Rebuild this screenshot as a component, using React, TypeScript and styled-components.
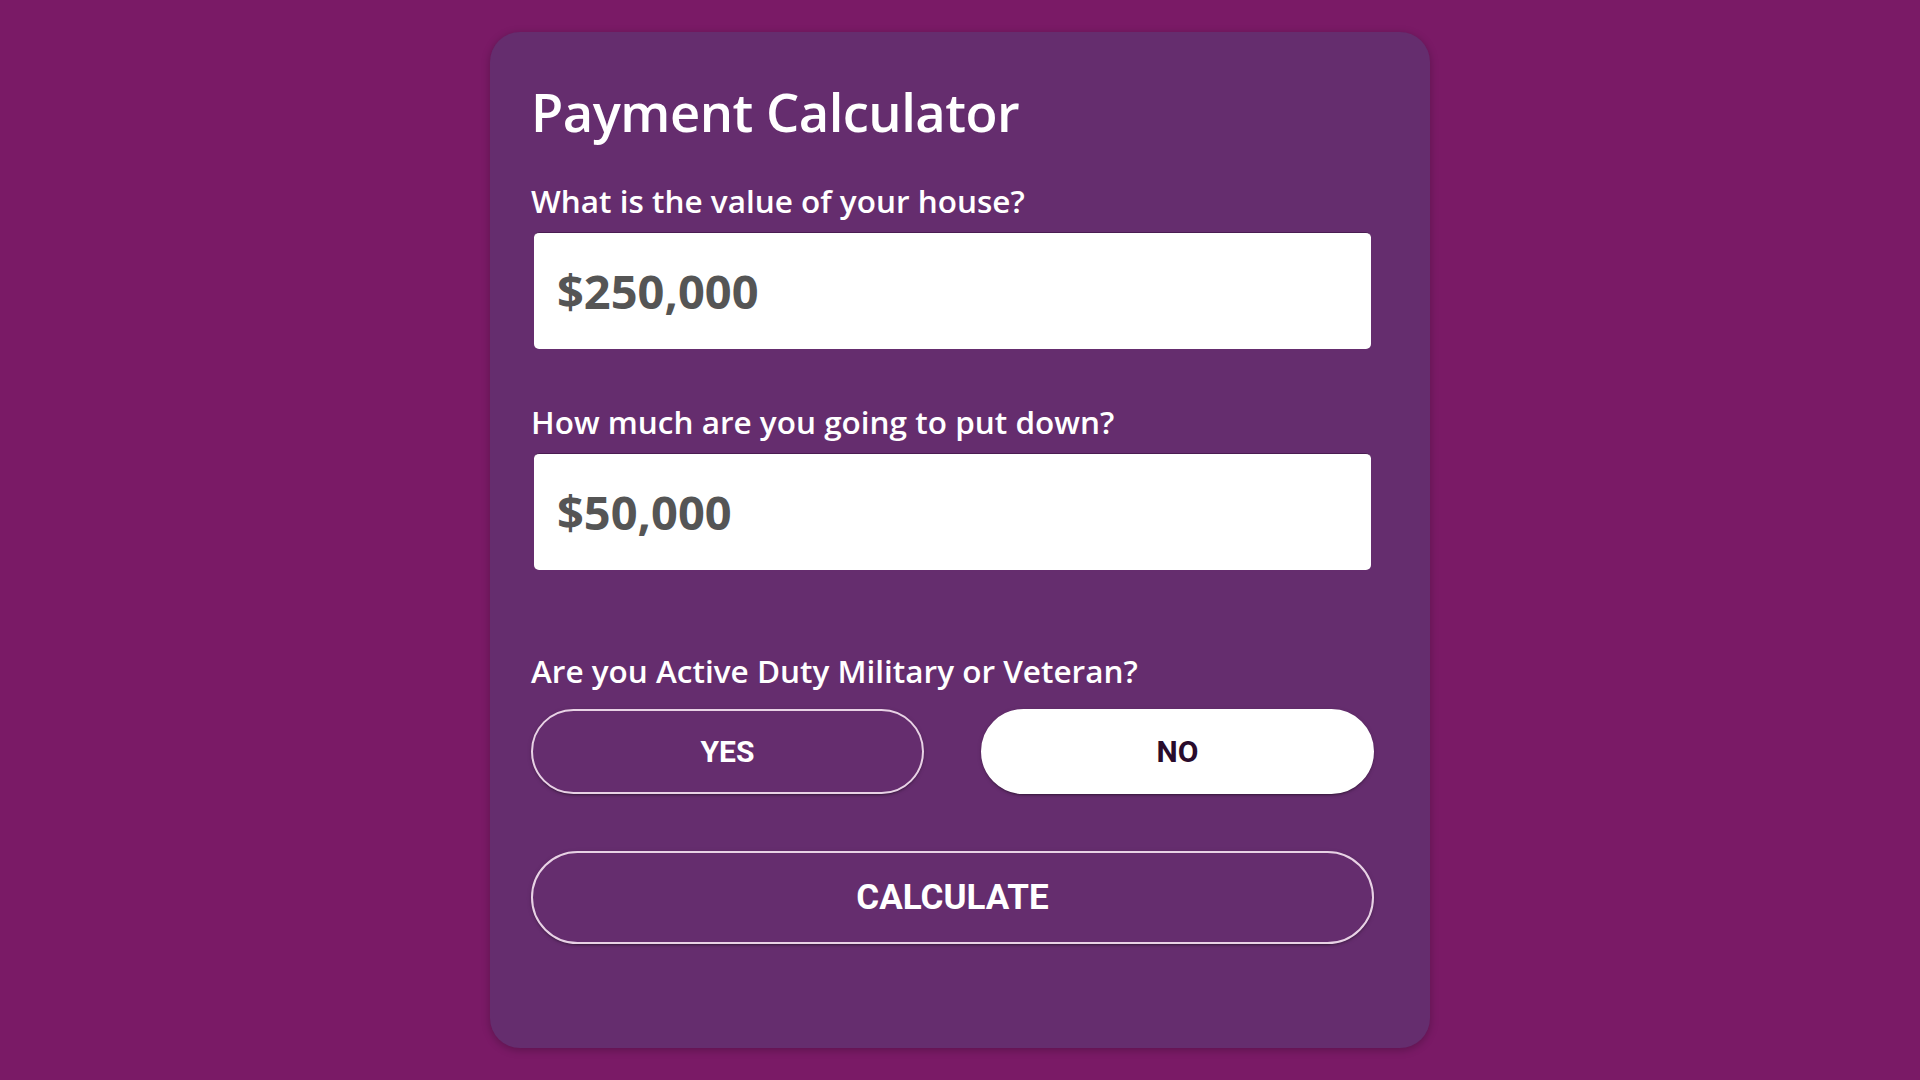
import React from 'react';
import styled, { createGlobalStyle } from 'styled-components';

const GlobalStyle = createGlobalStyle`
  html, body {
    margin: 0;
    padding: 0;
    background: #7a1a66;
  }

  * {
    box-sizing: border-box;
  }
`;

const Page = styled.div`
  min-height: 1080px;
  padding-top: 32px;
  display: flex;
  justify-content: center;
  align-items: flex-start;
`;

const Card = styled.div`
  width: 940px;
  height: 1016px;
  background: #652d6e;
  border-radius: 30px;
  box-shadow: 0 2px 8px rgba(0, 0, 0, 0.25);
  padding: 47px 56px 0 41px;
  display: flex;
  flex-direction: column;
  font-family: 'Open Sans', 'Noto Sans', sans-serif;
`;

const Title = styled.h1`
  margin: 0 0 39px;
  color: #ffffff;
  font-size: 52.5px;
  font-weight: 600;
  line-height: 65px;
  letter-spacing: -0.5px;
`;

const Label = styled.label<{ $gap?: number }>`
  display: block;
  margin: ${(p) => p.$gap ?? 0}px 0 13px;
  color: #ffffff;
  font-size: 31.5px;
  font-weight: 600;
  line-height: 36px;
`;

const Field = styled.input`
  display: block;
  width: 837px;
  height: 117px;
  margin: 0 3px;
  padding: 0 23px;
  border: none;
  border-top: 1px solid #4a1c52;
  border-radius: 5px;
  background: #ffffff;
  color: #555555;
  font-family: 'Open Sans', 'Noto Sans', sans-serif;
  font-size: 47px;
  font-weight: 700;
  outline: none;
`;

const Choices = styled.div`
  display: grid;
  grid-template-columns: 1fr 1fr;
  column-gap: 57px;
  margin-top: 7px;
  width: 843px;
`;

const PillButton = styled.button<{ $active?: boolean; $tall?: boolean }>`
  height: ${(p) => (p.$tall ? 93 : 85)}px;
  border-radius: 999px;
  border: 2px solid ${(p) => (p.$active ? '#ffffff' : 'rgba(255, 240, 250, 0.85)')};
  background: ${(p) => (p.$active ? '#ffffff' : 'transparent')};
  color: ${(p) => (p.$active ? '#2a0c2c' : '#ffffff')};
  font-family: Roboto, 'Liberation Sans', sans-serif;
  font-size: ${(p) => (p.$tall ? 35 : 30)}px;
  font-weight: 700;
  text-transform: uppercase;
  letter-spacing: 0;
  cursor: pointer;
  box-shadow:
    0px 3px 1px -2px rgba(0, 0, 0, 0.2),
    0px 2px 2px 0px rgba(0, 0, 0, 0.14),
    0px 1px 5px 0px rgba(0, 0, 0, 0.12);
`;

const CalculateButton = styled(PillButton)`
  width: 843px;
  margin-top: 57px;
`;

const App: React.FC = () => {
  return (
    <>
      <GlobalStyle />
      <Page>
        <Card>
          <Title>Payment Calculator</Title>
          <Label>What is the value of your house?</Label>
          <Field readOnly defaultValue="$250,000" />
          <Label $gap={55}>How much are you going to put down?</Label>
          <Field readOnly defaultValue="$50,000" />
          <Label $gap={83}>Are you Active Duty Military or Veteran?</Label>
          <Choices>
            <PillButton>Yes</PillButton>
            <PillButton $active>No</PillButton>
          </Choices>
          <CalculateButton $tall>Calculate</CalculateButton>
        </Card>
      </Page>
    </>
  );
};

export default App;
